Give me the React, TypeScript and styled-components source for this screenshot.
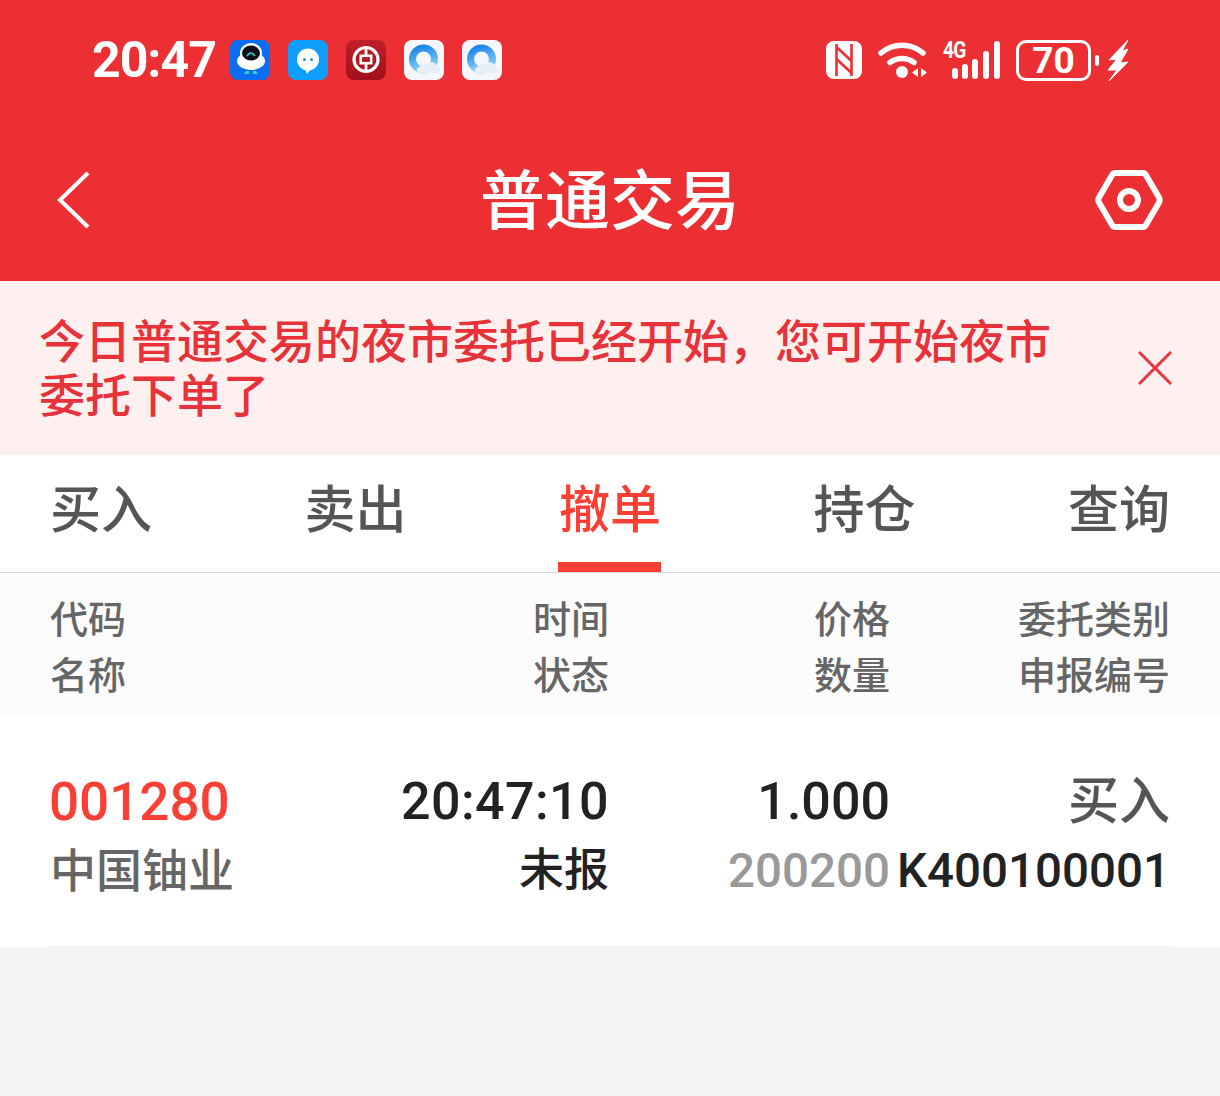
import React from 'react'
import styled, { createGlobalStyle } from 'styled-components'

const CJK = `Roboto, 'Noto Sans CJK SC', sans-serif`

const GlobalStyle = createGlobalStyle`
  html, body {
    margin: 0;
    padding: 0;
    background: #f4f4f4;
  }
  * {
    box-sizing: border-box;
  }
`

const RobotIcon = () => (
  <svg width="40" height="40" viewBox="0 0 40 40">
    <rect width="40" height="40" rx="8" fill="#0b6ef0" />
    <ellipse cx="21" cy="21" rx="14" ry="9" fill="#fff" />
    <ellipse cx="21" cy="13" rx="11" ry="10" fill="#fff" />
    <ellipse cx="21" cy="13" rx="9" ry="7.500" fill="#0c0f16" />
    <path d="M17 16q4 -6 8 0" stroke="#35d6c8" strokeWidth="1.6" fill="none" />
    <path d="M14 34h5v-3h-3zM23 31v3h5l-2 -3z" fill="#2ed3d8" />
  </svg>
)

const ChatIcon = () => (
  <svg width="40" height="40" viewBox="0 0 40 40">
    <rect width="40" height="40" rx="8" fill="#0f9dfb" />
    <circle cx="20" cy="19.500" r="11" fill="#fff" />
    <path d="M17 29l2 5 4 -5z" fill="#fff" />
    <circle cx="16.500" cy="19.500" r="1.500" fill="#2a8fd8" />
    <circle cx="23.500" cy="19.500" r="1.500" fill="#2a8fd8" />
  </svg>
)

const BankIcon = () => (
  <svg width="40" height="40" viewBox="0 0 40 40">
    <defs>
      <linearGradient id="bankFill" x1="0" y1="0" x2="0" y2="1">
        <stop offset="0" stopColor="#c11f2a" />
        <stop offset="1" stopColor="#a0101b" />
      </linearGradient>
    </defs>
    <rect width="40" height="40" rx="8" fill="url(#bankFill)" />
    <circle cx="20" cy="19.500" r="12" fill="none" stroke="#fff" strokeWidth="3.200" />
    <rect x="14.800" y="15.800" width="10.400" height="7.400" fill="none" stroke="#fff" strokeWidth="2.600" />
    <path d="M20 8v7M20 24v7" stroke="#fff" strokeWidth="2.800" />
  </svg>
)

const CloudIcon = ({ id }: { id: string }) => (
  <svg width="40" height="40" viewBox="0 0 40 40">
    <defs>
      <linearGradient id={id} x1="0" y1="0" x2="0.3" y2="1">
        <stop offset="0" stopColor="#1583ea" />
        <stop offset="1" stopColor="#86cdf9" />
      </linearGradient>
    </defs>
    <rect width="40" height="40" rx="8" fill="#f5f7fc" />
    <circle cx="19.500" cy="19" r="11" fill="none" stroke={`url(#${id})`} strokeWidth="7" />
    <path
      d="M16 33c-3.500 0 -4.500 -5 -0.500 -6c1 -3 5 -3.500 7 -2c3 -5 9.500 -3 10.500 2c4 0 4.500 6 0 6z"
      fill="#e9eff6"
    />
  </svg>
)

const NfcIcon = () => (
  <svg width="36" height="38" viewBox="0 0 36 38">
    <rect width="36" height="38" rx="8" fill="#fff" />
    <path
      d="M10.500 3v32M25.500 3v32M10.500 6L25.500 20M10.500 18L25.500 32"
      stroke="#ec2f33"
      strokeWidth="2.600"
      fill="none"
    />
  </svg>
)

const WifiIcon = () => (
  <svg width="49" height="40" viewBox="0 0 49 40">
    <path d="M3 13a32 32 0 0 1 42 0" fill="none" stroke="#fff" strokeWidth="5.500" strokeLinecap="round" />
    <path d="M12 22.500a20 20 0 0 1 24 0" fill="none" stroke="#fff" strokeWidth="5.500" strokeLinecap="round" />
    <circle cx="24" cy="32" r="6" fill="#fff" />
    <path d="M40 28v9l-6 -4.500zM43 28l6 4.500 -6 4.500z" fill="#fff" />
  </svg>
)

const SignalIcon = () => (
  <svg width="57" height="38" viewBox="0 0 57 38">
    <g fill="#fff">
      <rect x="9" y="27" width="6" height="11" rx="3" />
      <rect x="19" y="23" width="6" height="15" rx="3" />
      <rect x="29" y="18" width="6" height="20" rx="3" />
      <rect x="40" y="10" width="6" height="28" rx="3" />
      <rect x="51" y="0" width="6" height="38" rx="3" />
    </g>
  </svg>
)

const BoltIcon = () => (
  <svg width="20" height="41" viewBox="0 0 20 41">
    <path d="M20 0L1 20l8 -1L0 30h9L1 41 20 22l-8 1 8 -14 -6 2z" fill="#fff" stroke="#fff" strokeWidth="1" />
  </svg>
)

const BackIcon = () => (
  <svg width="36" height="60" viewBox="0 0 36 60">
    <path d="M33 3L5 30l28 27" fill="none" stroke="#fff" strokeWidth="4" />
  </svg>
)

const SettingIcon = () => (
  <svg width="68" height="62" viewBox="0 0 68 62">
    <path
      d="M20 4h28a3 3 0 0 1 2.600 1.500L64 28.500a5 5 0 0 1 0 5L50.600 56.500a3 3 0 0 1 -2.600 1.500H20a3 3 0 0 1 -2.600 -1.500L4 33.500a5 5 0 0 1 0 -5L17.400 5.500A3 3 0 0 1 20 4z"
      fill="none"
      stroke="#fff"
      strokeWidth="6"
    />
    <circle cx="34" cy="31" r="9" fill="none" stroke="#fff" strokeWidth="6" />
  </svg>
)

const CloseIcon = () => (
  <svg width="36" height="36" viewBox="0 0 36 36">
    <path d="M2 2l32 32M34 2L2 34" stroke="#e8343a" strokeWidth="3" fill="none" />
  </svg>
)

const Page = styled.div`
  width: 1220px;
  min-height: 1096px;
  background: #f4f4f4;
  font-family: ${CJK};
  overflow: hidden;
`

const TopArea = styled.div`
  background: #ec2f33;
  color: #fff;
`

const StatusBar = styled.div`
  height: 120px;
  display: flex;
  align-items: center;
  justify-content: space-between;
  padding: 0 92px;
`

const StatusLeft = styled.div`
  display: flex;
  align-items: center;
  gap: 18px;
`

const Clock = styled.div`
  font-size: 50px;
  font-weight: 700;
  width: 120px;
  letter-spacing: -1px;
  white-space: nowrap;
`

const StatusRight = styled.div`
  display: flex;
  align-items: center;
  gap: 16px;
`

const NetWrap = styled.div`
  position: relative;
  display: flex;
`

const NetLabel = styled.span`
  position: absolute;
  left: 0;
  top: -3px;
  font-size: 24px;
  line-height: 24px;
  font-weight: 700;
  letter-spacing: -1px;
  transform: scaleX(0.8);
  transform-origin: left;
`

const BatteryWrap = styled.div`
  display: flex;
  align-items: center;
`

const BatteryBody = styled.div`
  width: 75px;
  height: 41px;
  border: 3px solid #fff;
  border-radius: 10px;
  display: flex;
  align-items: center;
  justify-content: center;
  font-size: 37px;
  font-weight: 700;
`

const BatteryTip = styled.div`
  width: 4px;
  height: 11px;
  margin: 0 9px 0 4px;
  background: #fff;
  border-radius: 2px;
`

const Header = styled.div`
  height: 161px;
  display: flex;
  align-items: center;
  justify-content: space-between;
  padding: 0 57px 2px 55px;
  position: relative;
`

const Title = styled.div`
  position: absolute;
  left: 0;
  right: 0;
  top: 47px;
  text-align: center;
  font-size: 65px;
  line-height: 70px;
  font-weight: 500;
`

const Notice = styled.div`
  height: 174px;
  background: #fff0f0;
  display: flex;
  align-items: center;
  justify-content: space-between;
  padding: 0 47px 0 39px;
`

const NoticeText = styled.div`
  width: 1020px;
  padding-top: 1px;
  font-size: 46px;
  line-height: 54px;
  font-weight: 500;
  color: #e63238;
`

const Tabs = styled.div`
  height: 118px;
  background: #fff;
  border-bottom: 1px solid #d9d9d9;
  display: flex;
  justify-content: space-between;
  padding: 0 50px;
`

const Tab = styled.div<{ $active?: boolean }>`
  position: relative;
  height: 117px;
  padding-top: 21px;
  font-size: 51px;
  line-height: 70px;
  font-weight: 500;
  color: ${(p) => (p.$active ? '#fa4035' : '#555')};

  ${(p) =>
    p.$active &&
    `&::after {
      content: '';
      position: absolute;
      left: -1px;
      right: 0;
      bottom: 0;
      height: 10px;
      background: #fa4035;
    }`}
`

const Grid = styled.div`
  display: grid;
  grid-template-columns: 330px 229px 281px 280px;
  padding: 0 50px;
`

const TableHead = styled(Grid)`
  height: 145px;
  background: #fcfcfc;
  padding-top: 19px;
  font-size: 38px;
  line-height: 56px;
  font-weight: 500;
  color: #666;
`

const Cell = styled.div<{ $right?: boolean }>`
  text-align: ${(p) => (p.$right ? 'right' : 'left')};
  white-space: nowrap;
`

const RowWrap = styled.div`
  background: #fff;
  height: 229px;
`

const Row = styled(Grid)`
  padding-top: 49px;
  height: 229px;
  position: relative;
`

const RowDivider = styled.div`
  position: absolute;
  left: 50px;
  right: 50px;
  bottom: 0;
  height: 1px;
  background: #f0f0f0;
`

const MainLine = styled.div<{ $red?: boolean; $gray?: boolean; $wide?: boolean }>`
  font-size: ${(p) => (p.$red ? '53px' : p.$gray ? '51px' : '52px')};
  line-height: 70px;
  font-weight: 500;
  letter-spacing: ${(p) => (p.$wide ? '0.4px' : '0')};
  margin-left: ${(p) => (p.$red ? '-1px' : '0')};
  color: ${(p) => (p.$red ? '#fa4035' : p.$gray ? '#555' : '#222')};
`

const SubLine = styled.div<{ $muted?: boolean; $name?: boolean; $cn?: boolean }>`
  font-size: ${(p) => (p.$name ? '46px' : p.$cn ? '45px' : '47.500px')};
  line-height: 68px;
  font-weight: 500;
  color: ${(p) => (p.$muted ? '#999' : p.$name ? '#666' : '#222')};
`

export default function App() {
  return (
    <Page>
      <GlobalStyle />
      <TopArea>
        <StatusBar>
          <StatusLeft>
            <Clock>20:47</Clock>
            <RobotIcon />
            <ChatIcon />
            <BankIcon />
            <CloudIcon id="cloudA" />
            <CloudIcon id="cloudB" />
          </StatusLeft>
          <StatusRight>
            <NfcIcon />
            <WifiIcon />
            <NetWrap>
              <NetLabel>4G</NetLabel>
              <SignalIcon />
            </NetWrap>
            <BatteryWrap>
              <BatteryBody>70</BatteryBody>
              <BatteryTip />
              <BoltIcon />
            </BatteryWrap>
          </StatusRight>
        </StatusBar>
        <Header>
          <BackIcon />
          <Title>普通交易</Title>
          <SettingIcon />
        </Header>
      </TopArea>
      <Notice>
        <NoticeText>今日普通交易的夜市委托已经开始，您可开始夜市委托下单了</NoticeText>
        <CloseIcon />
      </Notice>
      <Tabs>
        <Tab>买入</Tab>
        <Tab>卖出</Tab>
        <Tab $active>撤单</Tab>
        <Tab>持仓</Tab>
        <Tab>查询</Tab>
      </Tabs>
      <TableHead>
        <Cell>
          代码
          <br />
          名称
        </Cell>
        <Cell $right>
          时间
          <br />
          状态
        </Cell>
        <Cell $right>
          价格
          <br />
          数量
        </Cell>
        <Cell $right>
          委托类别
          <br />
          申报编号
        </Cell>
      </TableHead>
      <RowWrap>
        <Row>
          <Cell>
            <MainLine $red>001280</MainLine>
            <SubLine $name>中国铀业</SubLine>
          </Cell>
          <Cell $right>
            <MainLine $wide>20:47:10</MainLine>
            <SubLine $cn>未报</SubLine>
          </Cell>
          <Cell $right>
            <MainLine>1.000</MainLine>
            <SubLine $muted>200200</SubLine>
          </Cell>
          <Cell $right>
            <MainLine $gray>买入</MainLine>
            <SubLine>K400100001</SubLine>
          </Cell>
          <RowDivider />
        </Row>
      </RowWrap>
    </Page>
  )
}
